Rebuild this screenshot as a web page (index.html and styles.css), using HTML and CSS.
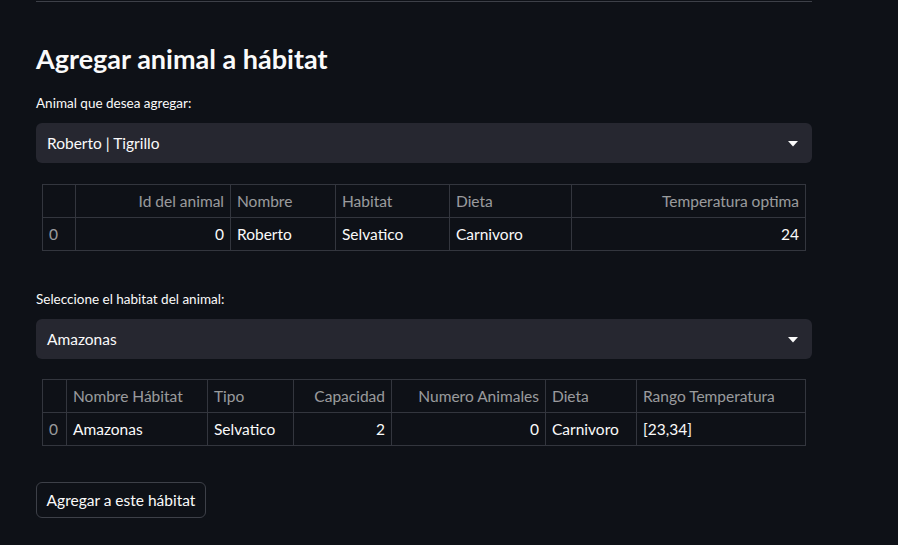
FILE: index.html
```html
<!DOCTYPE html>
<html lang="es">
<head>
<meta charset="utf-8">
<title>Agregar animal a hábitat</title>
<link rel="stylesheet" href="styles.css">
</head>
<body>
<main class="main">
  <div class="divider"></div>
  <h2 class="title">Agregar animal a hábitat</h2>

  <label class="label">Animal que desea agregar:</label>
  <div class="select">
    <span class="select-value">Roberto | Tigrillo</span>
    <svg class="caret" width="10" height="6" viewBox="0 0 10 6"><polygon points="0,0 10,0 5,5.5" fill="#fafafa"/></svg>
  </div>

  <table class="table t1">
    <colgroup><col style="width:33px"><col style="width:155px"><col style="width:105px"><col style="width:114px"><col style="width:122px"><col style="width:234px"></colgroup>
    <thead>
      <tr><th></th><th class="num">Id del animal</th><th>Nombre</th><th>Habitat</th><th>Dieta</th><th class="num">Temperatura optima</th></tr>
    </thead>
    <tbody>
      <tr><th class="idx">0</th><td class="num">0</td><td>Roberto</td><td>Selvatico</td><td>Carnivoro</td><td class="num">24</td></tr>
    </tbody>
  </table>

  <label class="label label2">Seleccione el habitat del animal:</label>
  <div class="select">
    <span class="select-value">Amazonas</span>
    <svg class="caret" width="10" height="6" viewBox="0 0 10 6"><polygon points="0,0 10,0 5,5.5" fill="#fafafa"/></svg>
  </div>

  <table class="table t2">
    <colgroup><col style="width:24px"><col style="width:141px"><col style="width:86px"><col style="width:98px"><col style="width:154px"><col style="width:91px"><col style="width:169px"></colgroup>
    <thead>
      <tr><th></th><th>Nombre Hábitat</th><th>Tipo</th><th class="num">Capacidad</th><th class="num">Numero Animales</th><th>Dieta</th><th>Rango Temperatura</th></tr>
    </thead>
    <tbody>
      <tr><th class="idx">0</th><td>Amazonas</td><td>Selvatico</td><td class="num">2</td><td class="num">0</td><td>Carnivoro</td><td>[23,34]</td></tr>
    </tbody>
  </table>

  <button class="button" type="button">Agregar a este hábitat</button>
</main>
</body>
</html>
```

FILE: styles.css
```css
* { box-sizing: border-box; }
html, body {
  margin: 0;
  padding: 0;
  background: #0e1117;
  color: #fafafa;
  font-family: Lato, "Noto Sans", sans-serif;
  width: 898px;
  height: 545px;
  overflow: hidden;
}
.main {
  width: 812px;
  padding-left: 36px;
  display: flex;
  flex-direction: column;
  align-items: flex-start;
}
.divider {
  width: 776px;
  height: 1px;
  margin-top: 1px;
  background: #3d4048;
}
.title {
  margin: 38px 0 0 0;
  height: 38px;
  line-height: 38px;
  font-size: 27px;
  font-weight: 700;
  color: #fafafa;
}
.label {
  margin-top: 15px;
  height: 20px;
  line-height: 20px;
  font-size: 13.5px;
  color: #fafafa;
}
.label2 { margin-top: 38px; }
.select {
  margin-top: 10px;
  width: 776px;
  height: 40px;
  background: #262730;
  border-radius: 6px;
  display: flex;
  align-items: center;
  justify-content: space-between;
  padding: 0 14px 0 11px;
  font-size: 15.5px;
}
.caret { display: block; margin-top: 1px; }
.table {
  margin-top: 21px;
  margin-left: 6px;
  width: 763px;
  table-layout: fixed;
  border-collapse: collapse;
  font-size: 15.5px;
}
.t2 { margin-top: 20px; }
.table th, .table td {
  border: 1px solid #33363e;
  padding: 4px 6px;
  height: 33px;
  line-height: 24px;
  text-align: left;
  white-space: nowrap;
  overflow: hidden;
  font-weight: 400;
}
.table thead th { color: rgba(250, 250, 250, 0.6); }
.table td { color: #fafafa; }
.table .idx { color: rgba(250, 250, 250, 0.6); }
.table .num { text-align: right; }
.button {
  margin-top: 36px;
  width: 170px;
  height: 36px;
  background: transparent;
  border: 1px solid #3d4048;
  border-radius: 6px;
  color: #fafafa;
  font-family: inherit;
  font-size: 15.5px;
  padding: 0 8px;
  text-align: center;
  white-space: nowrap;
}
```
